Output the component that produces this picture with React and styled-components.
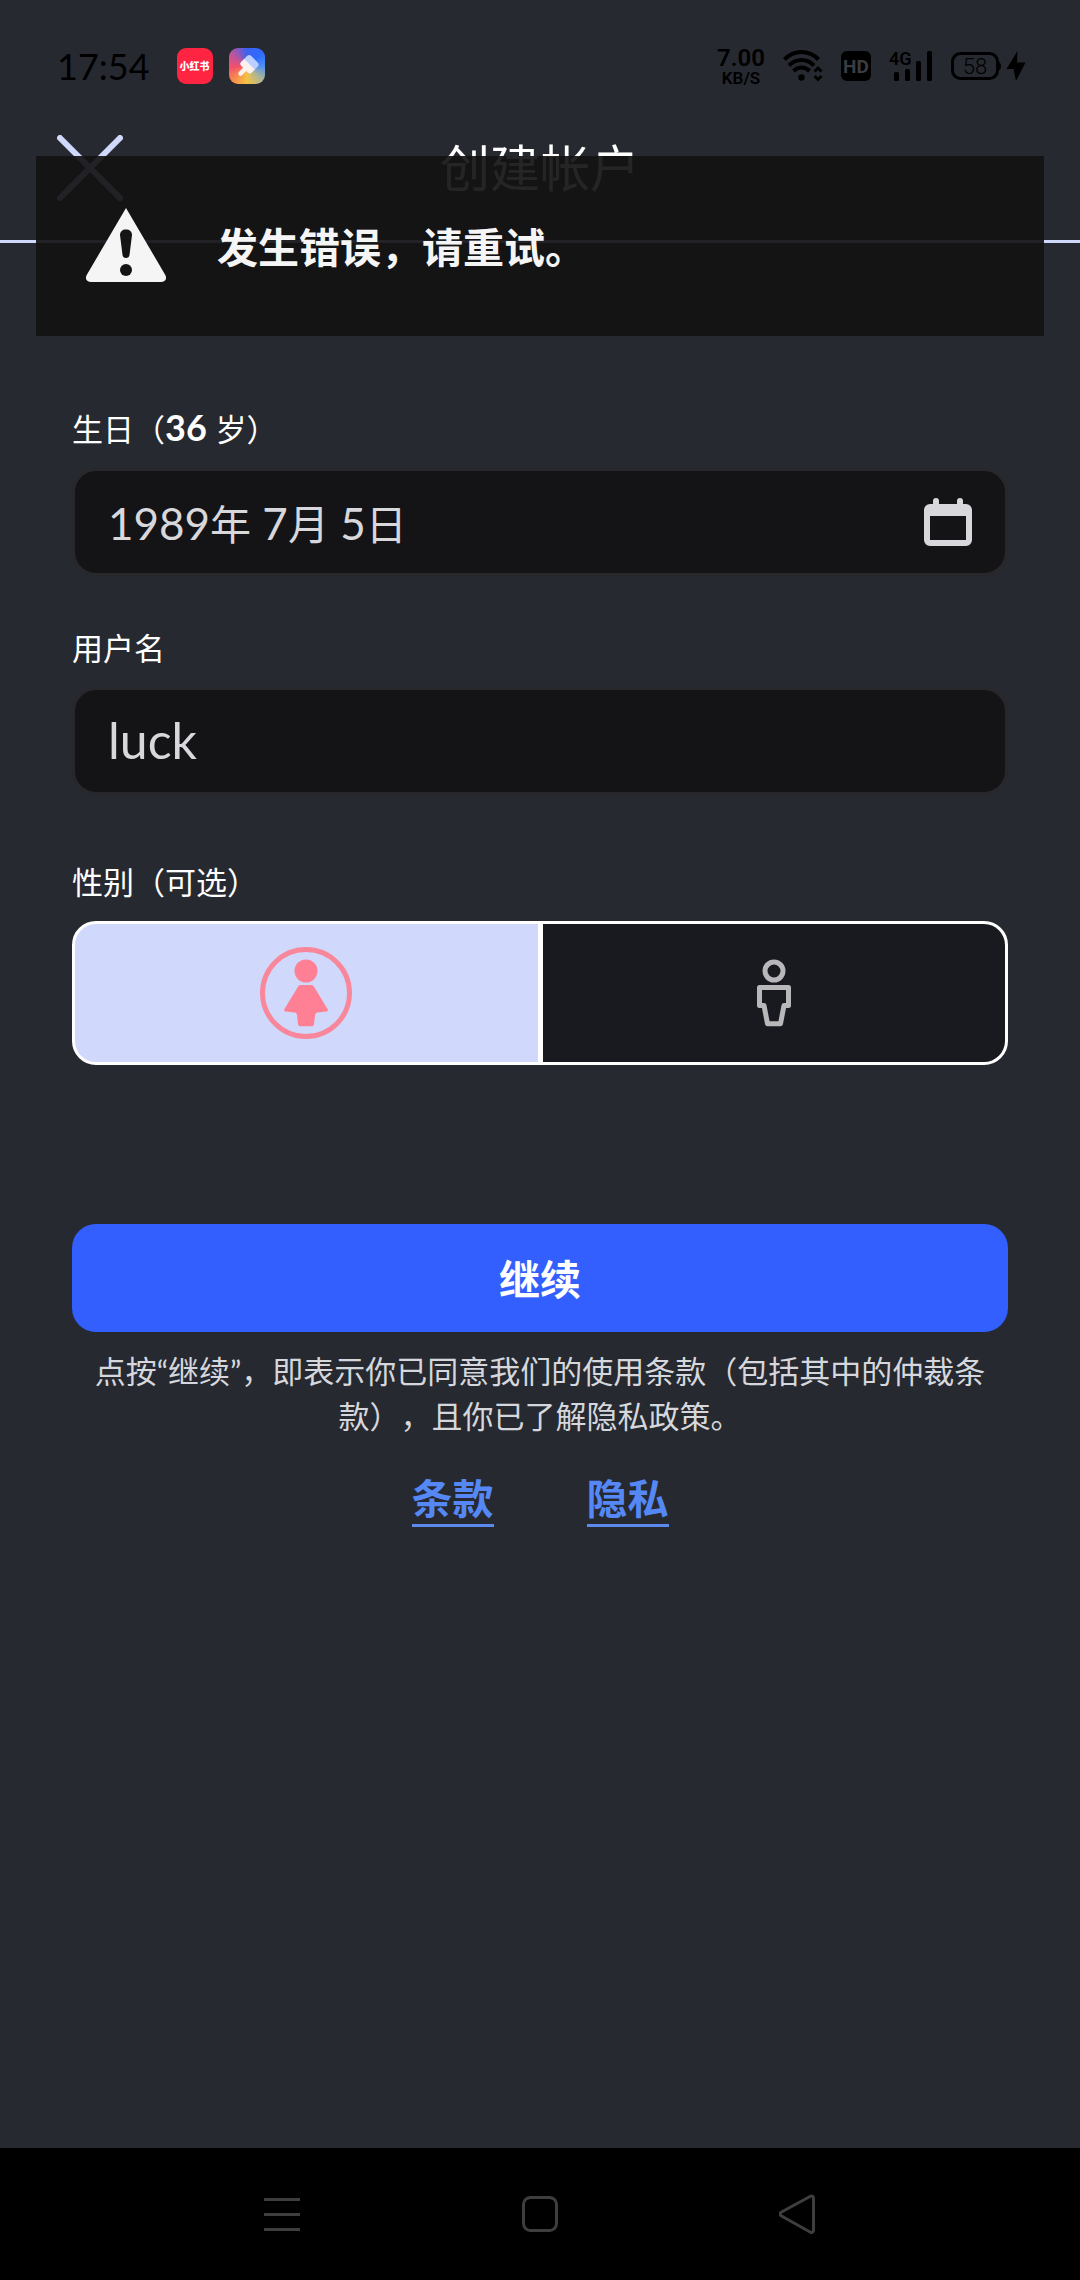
import React, { useState } from 'react';
import styled, { createGlobalStyle } from 'styled-components';

const GlobalStyle = createGlobalStyle`
  * {
    box-sizing: border-box;
  }
  body {
    margin: 0;
    background: #262930;
  }
  body, button, input {
    font-family: Lato, "Noto Sans CJK SC", sans-serif;
    text-spacing-trim: space-all;
  }
`;

const Screen = styled.div`
  position: relative;
  min-height: 100vh;
  display: flex;
  flex-direction: column;
  background: #262930;
  color: #fff;
`;

const StatusBar = styled.div`
  height: 96px;
  padding: 36px 54px 0 57px;
  display: flex;
  align-items: center;
  justify-content: space-between;
  color: #000;
`;

const StatusGroup = styled.div`
  display: flex;
  align-items: center;
  gap: ${(props) => props.$gap}px;
`;

const Clock = styled.span`
  margin-right: 11px;
  font-size: 36px;
  line-height: 36px;
`;

const AppBadge = styled.div`
  width: 36px;
  height: 36px;
  border-radius: 9px;
  display: flex;
  align-items: center;
  justify-content: center;
  background: ${(props) => props.$background};
  color: #fff;
  font-size: 10px;
  font-weight: 900;
  line-height: 36px;
`;

const NetSpeed = styled.div`
  display: flex;
  flex-direction: column;
  align-items: center;
  font-family: Roboto, sans-serif;
  font-weight: 600;
`;

const SpeedValue = styled.span`
  font-size: 24px;
  line-height: 24px;
`;

const SpeedUnit = styled.span`
  font-size: 17px;
  line-height: 17px;
`;

const Header = styled.header`
  height: 147px;
  padding: 0 57px;
  display: grid;
  grid-template-columns: 66px 1fr 66px;
  align-items: center;
  border-bottom: 3px solid #d0d8fb;
`;

const IconButton = styled.button`
  display: flex;
  padding: 0;
  border: 0;
  background: none;
  color: inherit;
  cursor: pointer;
`;

const Title = styled.h1`
  margin: 0;
  text-align: center;
  font-size: 50px;
  font-weight: 400;
  line-height: 60px;
`;

const Toast = styled.div`
  position: absolute;
  top: 156px;
  left: 36px;
  right: 36px;
  height: 180px;
  padding: 0 50px 3px;
  display: flex;
  align-items: center;
  gap: 51px;
  background: rgba(18, 18, 20, 0.92);
  color: #f5f5f5;
  font-size: 41px;
  font-weight: 700;
`;

const Form = styled.form`
  flex: 1;
  padding: 165px 72px 72px;
  display: flex;
  flex-direction: column;
`;

const Field = styled.div`
  display: flex;
  flex-direction: column;
  gap: 18px;
  margin-bottom: ${(props) => props.$space}px;
`;

const Label = styled.label`
  font-size: 31px;
  line-height: 42px;
`;

const Age = styled.span`
  font-size: 36px;
  font-weight: 700;
  line-height: 36px;
`;

const DateButton = styled.button`
  height: 108px;
  padding: 0 33px;
  display: flex;
  align-items: center;
  justify-content: space-between;
  border: 3px solid #28282c;
  border-radius: 24px;
  background: #141416;
  color: #d8d8dc;
  font-size: 41px;
  cursor: pointer;
`;

const Digits = styled.span`
  font-size: 44px;
  line-height: 44px;
`;

const TextInput = styled.input`
  height: 108px;
  padding: 0 33px 3px;
  border: 3px solid #28282c;
  border-radius: 24px;
  background: #141416;
  color: #d8d8dc;
  font-size: 50px;
  outline: none;
`;

const GenderGroup = styled.div`
  height: 144px;
  display: flex;
  gap: 5px;
  overflow: hidden;
  border: 3px solid #fff;
  border-radius: 24px;
  background: #fff;
`;

const GenderOption = styled.label`
  flex: 1;
  display: flex;
  align-items: center;
  justify-content: center;
  background: ${(props) => (props.$selected ? '#d0d8fb' : '#191a1f')};
  cursor: pointer;
`;

const HiddenRadio = styled.input`
  appearance: none;
  width: 0;
  height: 0;
  margin: 0;
`;

const SubmitButton = styled.button`
  height: 108px;
  padding: 0 0 3px;
  border: 0;
  border-radius: 24px;
  background: #335fff;
  color: #fff;
  font-size: 41px;
  font-weight: 700;
  cursor: pointer;
`;

const Terms = styled.p`
  margin: 17px 0 35px;
  text-align: center;
  color: #d5d7dc;
  font-size: 31px;
  line-height: 45px;
`;

const Links = styled.div`
  display: flex;
  justify-content: center;
  gap: 93px;
`;

const Link = styled.a`
  border-bottom: 3px solid #5b89ee;
  color: #5588f5;
  font-size: 41px;
  font-weight: 700;
  line-height: 50px;
  text-decoration: none;
`;

const NavBar = styled.nav`
  height: 132px;
  display: flex;
  align-items: center;
  justify-content: center;
  gap: 220px;
  background: #000;
  color: #3e3e3e;
`;

const RAINBOW =
  'conic-gradient(from 0deg, #3b62f0, #2f6bff 50deg, #4d8ff5 90deg, #a9b59a 130deg, #f6c243 180deg, #f79a4a 215deg, #f4506a 265deg, #b9559f 310deg, #3b62f0)';

function BrushIcon() {
  return (
    <svg width="36" height="36" viewBox="0 0 36 36" aria-hidden="true">
      <g transform="rotate(45 18 18)">
        <rect x="11" y="8" width="15" height="10" rx="3" fill="#bccfff" />
        <path
          d="M11 15h15v4.500a2.500 2.500 0 0 1-2.500 2.500H21v6a2.200 2.200 0 0 1-4.400 0v-6h-3.100a2.500 2.500 0 0 1-2.500-2.500z"
          fill="#fdf1ee"
        />
      </g>
    </svg>
  );
}

function WifiIcon() {
  return (
    <svg width="40" height="32" viewBox="0 0 40 32" fill="none" stroke="#000" aria-hidden="true">
      <path d="M1.500 9.500C11-.500 26-.500 35.500 9.500" strokeWidth="4" />
      <path d="M6 15.500c7-7.300 18-7.300 25 0" strokeWidth="4" />
      <path d="M10.500 21c4.500-4.600 11.500-4.600 16 0" strokeWidth="4" />
      <circle cx="18.500" cy="27.500" r="3.200" fill="#000" stroke="none" />
      <path d="M31.500 21.500l3.500-3.500 3.500 3.500M31.500 26l3.500 3.500 3.500-3.500" strokeWidth="3" />
    </svg>
  );
}

function HdIcon() {
  return (
    <svg width="30" height="30" viewBox="0 0 30 30" aria-label="HD">
      <rect width="30" height="30" rx="6" fill="#000" />
      <text x="15" y="22" textAnchor="middle" fontFamily="Roboto, sans-serif" fontSize="19" fontWeight="700" fill="#3a3d43">
        HD
      </text>
    </svg>
  );
}

function SignalIcon() {
  return (
    <svg width="44" height="42" viewBox="0 -6 44 42" aria-label="4G">
      <text x="0" y="14" fontFamily="Roboto, sans-serif" fontSize="18" fontWeight="600">
        4G
      </text>
      <rect x="5" y="21" width="5" height="9" rx="1.500" />
      <rect x="16" y="18" width="5" height="12" rx="1.500" />
      <rect x="27" y="10" width="5" height="20" rx="1.500" />
      <rect x="38" y="0" width="5" height="30" rx="1.500" />
    </svg>
  );
}

function BatteryIcon() {
  return (
    <svg width="75" height="30" viewBox="0 0 75 30" aria-label="58%">
      <rect x="1.500" y="2.500" width="45" height="25" rx="8" fill="none" stroke="#000" strokeWidth="3" />
      <path d="M47 10c2 1 3 3 3 5s-1 4-3 5z" />
      <text x="24" y="23" textAnchor="middle" fontFamily="Roboto, sans-serif" fontSize="22" fontWeight="300">
        58
      </text>
      <path d="M66.500 0L55.500 18h8l-1 0L65 30 74.500 11.500H66z" />
    </svg>
  );
}

function CloseIcon() {
  return (
    <svg width="66" height="66" viewBox="0 0 66 66" stroke="#d0d8fb" strokeWidth="6" strokeLinecap="round">
      <path d="M3 3l60 60M63 3L3 63" />
    </svg>
  );
}

function WarningIcon() {
  return (
    <svg width="80" height="74" viewBox="0 0 80 74" aria-hidden="true">
      <path
        d="M40 0L79 66.500C81.500 70.500 79.500 74 75 74H5C.500 74-1.500 70.500 1 66.500z"
        fill="#f5f5f5"
      />
      <path
        d="M34 27c0-3.500 2.500-5.500 6-5.500s6 2 6 5.500l-2.500 20c-.300 2-1.500 3-3.500 3s-3.200-1-3.500-3z"
        fill="#141416"
      />
      <circle cx="40" cy="62" r="6" fill="#141416" />
    </svg>
  );
}

function CalendarIcon() {
  return (
    <svg width="48" height="48" viewBox="0 0 48 48" fill="#d8d8dc" aria-hidden="true">
      <path d="M9 9V3a3 3 0 0 1 6 0v6zM33 9V3a3 3 0 0 1 6 0v6z" />
      <path
        fillRule="evenodd"
        d="M6 6h36a6 6 0 0 1 6 6v30a6 6 0 0 1-6 6H6a6 6 0 0 1-6-6V12a6 6 0 0 1 6-6zM6 18v24h36V18z"
      />
    </svg>
  );
}

function FemaleIcon() {
  return (
    <svg width="92" height="92" viewBox="0 0 92 92" aria-hidden="true">
      <circle cx="46" cy="46" r="43.500" fill="none" stroke="#f9879b" strokeWidth="5" />
      <g fill="#ff8094">
        <circle cx="46" cy="24" r="11.500" />
        <path d="M41 38h10c1.500 0 2.500.700 3.200 2l13.300 22c.800 1.500.300 2.500-1.500 2.500l-8.500 1c-1.500.300-2.200 1-2.400 2.500L54 77c-.300 1.600-1 2.300-2.500 2.300h-11c-1.500 0-2.200-.700-2.500-2.300l-1-9c-.200-1.500-1-2.200-2.500-2.500l-8.500-1c-1.800 0-2.300-1-1.500-2.500L37.800 40c.700-1.300 1.700-2 3.200-2z" />
      </g>
    </svg>
  );
}

function MaleIcon() {
  return (
    <svg width="92" height="92" viewBox="0 0 92 92" fill="none" stroke="#b8b8ba" strokeWidth="5" aria-hidden="true">
      <circle cx="46" cy="24" r="9" />
      <path d="M31.500 40.500h29V58.500h-4.500l-3.500 18.200h-13L36 58.500h-4.500z" strokeLinejoin="round" />
    </svg>
  );
}

const genders = [
  { value: 'female', name: '女', Icon: FemaleIcon },
  { value: 'male', name: '男', Icon: MaleIcon },
];

function App() {
  const [username, setUsername] = useState('luck');
  const [gender, setGender] = useState('female');

  return (
    <Screen>
      <GlobalStyle />
      <StatusBar>
        <StatusGroup $gap={16}>
          <Clock>17:54</Clock>
          <AppBadge $background="#ff2442">小红书</AppBadge>
          <AppBadge $background={RAINBOW}>
            <BrushIcon />
          </AppBadge>
        </StatusGroup>
        <StatusGroup $gap={18}>
          <NetSpeed>
            <SpeedValue>7.00</SpeedValue>
            <SpeedUnit>KB/S</SpeedUnit>
          </NetSpeed>
          <WifiIcon />
          <HdIcon />
          <SignalIcon />
          <BatteryIcon />
        </StatusGroup>
      </StatusBar>

      <Header>
        <IconButton type="button" aria-label="关闭">
          <CloseIcon />
        </IconButton>
        <Title>创建帐户</Title>
      </Header>

      <Toast role="alert">
        <WarningIcon />
        发生错误，请重试。
      </Toast>

      <Form onSubmit={(e) => e.preventDefault()}>
        <Field $space={51}>
          <Label htmlFor="birthday">
            生日（<Age>36 </Age>岁）
          </Label>
          <DateButton id="birthday" type="button">
            <span>
              <Digits>1989</Digits>年<Digits> 7</Digits>月<Digits> 5</Digits>日
            </span>
            <CalendarIcon />
          </DateButton>
        </Field>

        <Field $space={66}>
          <Label htmlFor="username">用户名</Label>
          <TextInput
            id="username"
            type="text"
            value={username}
            onChange={(e) => setUsername(e.target.value)}
          />
        </Field>

        <Field $space={159}>
          <Label as="span" id="gender-label">
            性别（可选）
          </Label>
          <GenderGroup role="radiogroup" aria-labelledby="gender-label">
            {genders.map(({ value, name, Icon }) => (
              <GenderOption key={value} $selected={gender === value}>
                <HiddenRadio
                  type="radio"
                  name="gender"
                  value={value}
                  aria-label={name}
                  checked={gender === value}
                  onChange={() => setGender(value)}
                />
                <Icon />
              </GenderOption>
            ))}
          </GenderGroup>
        </Field>

        <SubmitButton type="submit">继续</SubmitButton>
        <Terms>
          点按“继续”，即表示你已同意我们的使用条款（包括其中的仲裁条款），且你已了解隐私政策。
        </Terms>
        <Links>
          <Link href="#terms">条款</Link>
          <Link href="#privacy">隐私</Link>
        </Links>
      </Form>

      <NavBar>
        <IconButton type="button" aria-label="菜单">
          <svg width="38" height="40" viewBox="0 0 38 40" stroke="currentColor" strokeWidth="3">
            <path d="M1 5.500h36M1 20.500h36M1 35.500h36" />
          </svg>
        </IconButton>
        <IconButton type="button" aria-label="主页">
          <svg width="38" height="40" viewBox="0 0 38 40" fill="none" stroke="currentColor" strokeWidth="3">
            <rect x="2.500" y="3.500" width="33" height="33" rx="7" />
          </svg>
        </IconButton>
        <IconButton type="button" aria-label="返回">
          <svg width="38" height="40" viewBox="1 0 38 40" fill="none" stroke="currentColor" strokeWidth="3">
            <path d="M32 2.500L3.500 18q-3 2 0 4L32 38q3.500 1.500 3.500-2V4.500q0-3.500-3.500-2z" />
          </svg>
        </IconButton>
      </NavBar>
    </Screen>
  );
}

export default App;
